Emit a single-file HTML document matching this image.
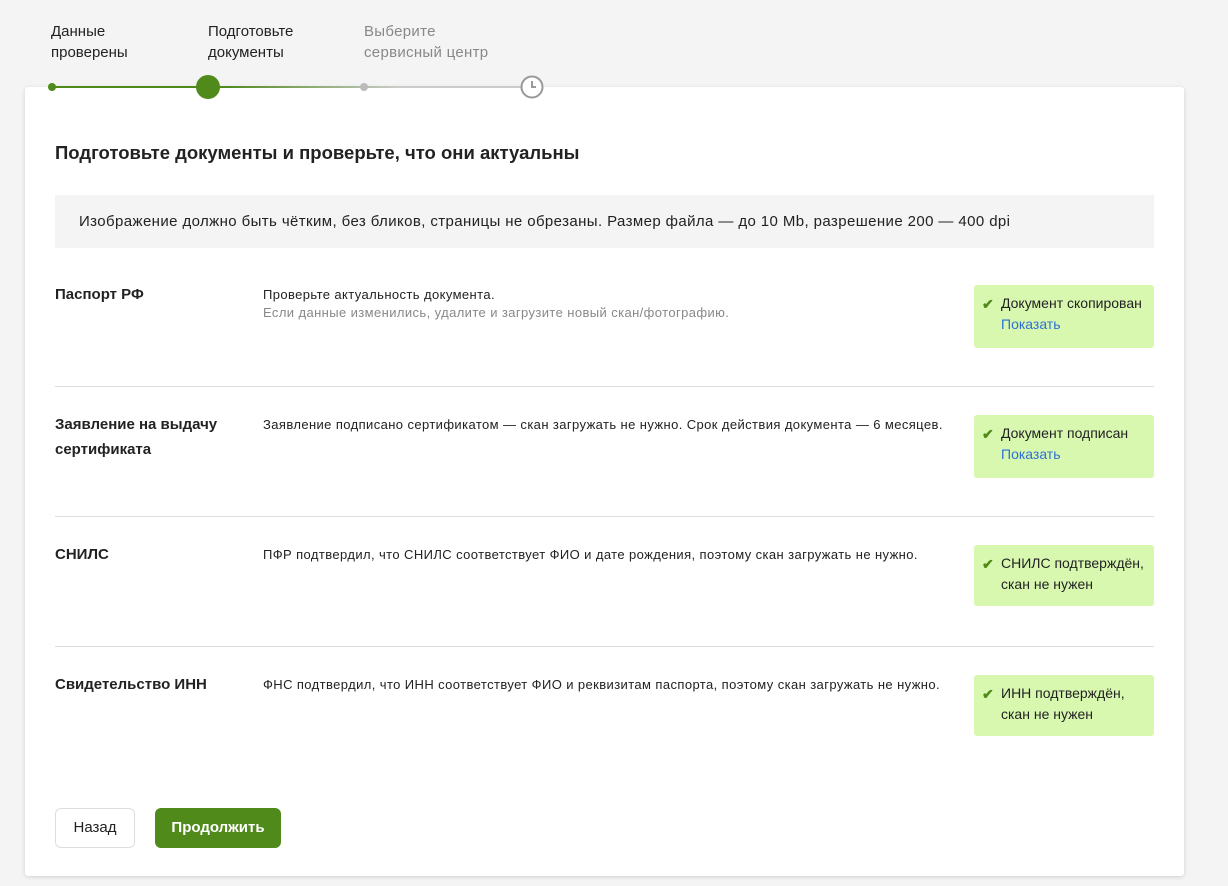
<!DOCTYPE html>
<html><head><meta charset="utf-8"><style>
body{margin:0;width:1228px;height:886px;background:#f4f4f4;font-family:"Liberation Sans",sans-serif;position:relative;overflow:hidden;color:#222}
.a{position:absolute}
.card{left:25px;top:87px;width:1159px;height:789px;background:#fff;box-shadow:0 1px 4px rgba(0,0,0,.15);border-radius:3px}
.st{font-size:15px;line-height:21px;top:21px}
.t{font-size:15px;font-weight:bold;line-height:25px}
.d{font-size:13px;line-height:18px;letter-spacing:0.4px}
.g{color:#888}
.badge{left:974px;width:180px;background:#d8f8b0;border-radius:3px;font-size:14px;line-height:21px;padding:8px 0 0 0;box-sizing:border-box}
.badge .c{position:absolute;left:8px;top:9px}
.badge span.x{position:absolute;left:27px}
.hr{left:55px;width:1099px;height:1px;background:#ddd}
a{color:#2f6fd6;text-decoration:none}
.c{color:#4f8a1a;font-size:14px;font-weight:bold}
</style></head><body>
<div class="a card"></div>
<div class="a st" style="left:51px">Данные<br>проверены</div>
<div class="a st" style="left:208px">Подготовьте<br>документы</div>
<div class="a st g" style="left:364px;letter-spacing:0.3px">Выберите<br>сервисный центр</div>
<div class="a" style="left:52px;top:86px;width:156px;height:2px;background:#4f8a1a"></div>
<div class="a" style="left:208px;top:86px;width:320px;height:2px;background:linear-gradient(90deg,#4f8a1a 0,#4f8a1a 15px,#ccc 60%)"></div>
<div class="a" style="left:48px;top:83px;width:8px;height:8px;border-radius:50%;background:#4f8a1a"></div>
<div class="a" style="left:196px;top:75px;width:24px;height:24px;border-radius:50%;background:#4f8a1a"></div>
<div class="a" style="left:360px;top:83px;width:8px;height:8px;border-radius:50%;background:#bbb"></div>
<svg class="a" style="left:520px;top:75px" width="24" height="24" viewBox="0 0 24 24"><circle cx="12" cy="12" r="10.5" fill="#fff" stroke="#999" stroke-width="2"/><path d="M12 6v6h4" fill="none" stroke="#999" stroke-width="2"/></svg>
<div class="a" style="left:55px;top:141px;font-size:18.5px;font-weight:bold;line-height:24px">Подготовьте документы и проверьте, что они актуальны</div>
<div class="a" style="left:55px;top:195px;width:1099px;height:53px;background:#f4f4f4;font-size:15px;line-height:53px;box-sizing:border-box;padding-left:24px;letter-spacing:0.4px">Изображение должно быть чётким, без бликов, страницы не обрезаны. Размер файла — до 10 Mb, разрешение 200 — 400 dpi</div>

<div class="a t" style="left:55px;top:282px">Паспорт РФ</div>
<div class="a d" style="left:263px;top:286px">Проверьте актуальность документа.<br><span class="g">Если данные изменились, удалите и загрузите новый скан/фотографию.</span></div>
<div class="a badge" style="top:285px;height:63px"><span class="c">✔</span><span class="x">Документ скопирован<br><a>Показать</a></span></div>
<div class="a hr" style="top:386px"></div>

<div class="a t" style="left:55px;top:412px">Заявление на выдачу<br>сертификата</div>
<div class="a d" style="left:263px;top:416px">Заявление подписано сертификатом — скан загружать не нужно. Срок действия документа — 6 месяцев.</div>
<div class="a badge" style="top:415px;height:63px"><span class="c">✔</span><span class="x">Документ подписан<br><a>Показать</a></span></div>
<div class="a hr" style="top:516px"></div>

<div class="a t" style="left:55px;top:542px">СНИЛС</div>
<div class="a d" style="left:263px;top:546px">ПФР подтвердил, что СНИЛС соответствует ФИО и дате рождения, поэтому скан загружать не нужно.</div>
<div class="a badge" style="top:545px;height:61px"><span class="c">✔</span><span class="x">СНИЛС подтверждён,<br>скан не нужен</span></div>
<div class="a hr" style="top:646px"></div>

<div class="a t" style="left:55px;top:672px">Свидетельство ИНН</div>
<div class="a d" style="left:263px;top:676px">ФНС подтвердил, что ИНН соответствует ФИО и реквизитам паспорта, поэтому скан загружать не нужно.</div>
<div class="a badge" style="top:675px;height:61px"><span class="c">✔</span><span class="x">ИНН подтверждён,<br>скан не нужен</span></div>

<div class="a" style="left:55px;top:808px;width:80px;height:40px;box-sizing:border-box;border:1px solid #ddd;border-radius:6px;font-size:15px;line-height:38px;text-align:center">Назад</div>
<div class="a" style="left:155px;top:808px;width:126px;height:40px;background:#4f8a1a;border-radius:6px;color:#fff;font-size:15px;font-weight:bold;line-height:40px;text-align:center">Продолжить</div>
</body></html>
